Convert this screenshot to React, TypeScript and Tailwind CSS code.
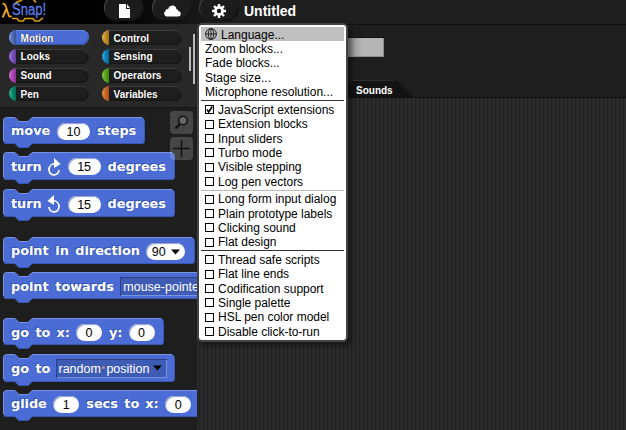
import React from "react";

const SANS = "font-['Liberation_Sans',Arial,sans-serif]";

function Category({ label, color, active }: { label: string; color: string; active?: boolean }) {
  return (
    <div
      className={`flex h-[15px] w-20 items-center overflow-hidden rounded-full font-bold leading-none text-white ${SANS} ${
        active
          ? "bg-[#4a6cd4] shadow-[inset_0_1px_0_#6a88e0,inset_-1px_-1px_1px_#3551a8]"
          : "bg-[#1e1e1e] shadow-[inset_0_1px_0_#3c3c3c,inset_-1px_-1px_1px_#161616]"
      }`}
    >
      <span
        className="h-full w-[7px] shrink-0 bg-linear-to-r from-white/20 to-black/30"
        style={{ backgroundColor: color }}
      />
      <span className="ml-[4.6px] pt-[2px] text-[10px] [text-shadow:0_0_1px_#000]">{label}</span>
    </div>
  );
}

const LEFT = [
  ["Motion", "#5a7ad8"],
  ["Looks", "#8f56e3"],
  ["Sound", "#cf4ad9"],
  ["Pen", "#00a178"],
];
const RIGHT = [
  ["Control", "#e6a822"],
  ["Sensing", "#0494dc"],
  ["Operators", "#62c213"],
  ["Variables", "#f3761d"],
];

function Block({ width, height, gap, children }: { width: number; height: number; gap: number; children: React.ReactNode }) {
  const w = width;
  const h = height;
  const d = `M.5 3.5Q.5 .5 3.5 .5H12L16 4.5H25L29 .5H${w - 3.5}Q${w - 0.5} .5 ${w - 0.5} 3.5V${h - 3}Q${w - 0.5} ${h} ${w - 3.5} ${h}H29L25 ${h + 4}H16L12 ${h}H3.5Q.5 ${h} .5 ${h - 3}Z`;
  return (
    <div className="relative shrink-0" style={{ width: w, height: h, marginTop: gap }}>
      <svg className="absolute left-0 top-0 overflow-visible" width={w} height={h + 5}>
        <path d={d} fill="#4a6cd4" />
        <path d={`M.5 ${h - 3}V3.5Q.5 .5 3.5 .5H12L16 4.5H25L29 .5H${w - 3}`} fill="none" stroke="#7893e2" />
        <path
          d={`M${w - 0.5} 4V${h - 3}Q${w - 0.5} ${h - 0.5} ${w - 3.5} ${h - 0.5}H29L25 ${h + 3.5}H16L12 ${h - 0.5}H3`}
          fill="none"
          stroke="#3857b4"
        />
      </svg>
      <div className="relative flex h-full items-center pl-2 pt-[2px]">{children}</div>
    </div>
  );
}

function Word({ w, children }: { w: number; children: string }) {
  return (
    <span
      className="shrink-0 whitespace-nowrap font-['DejaVu_Sans',sans-serif] text-[12.8px] font-bold leading-4 text-white [text-shadow:-1px_-1px_0_#3654ad]"
      style={{ width: w }}
    >
      {children}
    </span>
  );
}

function Num({ w, mr = 0, arrow, children }: { w: number; mr?: number; arrow?: boolean; children: string }) {
  return (
    <span
      className={`flex h-[17px] shrink-0 items-center justify-center rounded-full bg-white pt-[2px] text-[12.5px] leading-none text-black shadow-[inset_1px_1px_1px_#8e9cc8] ${SANS}`}
      style={{ width: w, marginRight: mr }}
    >
      {children}
      {arrow && (
        <svg className="-mt-px ml-[5px]" width="9" height="6">
          <path d="M0 .5H9L4.5 5.5Z" />
        </svg>
      )}
    </span>
  );
}

function Turn({ left }: { left?: boolean }) {
  return (
    <svg className={left ? "mr-[6.6px] mt-px -scale-x-100" : "mr-[6.6px] mt-px"} width="14" height="19" viewBox="0 0 14 19">
      <path d="M8 5.5C4 6 1.7 8.7 2 12C2.4 15.3 4.7 17 7.2 16.8C10 16.6 11.8 14.5 12 12" fill="none" stroke="#fff" strokeWidth="1.7" />
      <path d="M7 0L13.5 6L7 10Z" fill="#fff" />
    </svg>
  );
}

function Item({ children }: { children: string }) {
  return <div className="flex h-[14.35px] items-center pl-1 pt-px">{children}</div>;
}

function Check({ on, children }: { on?: boolean; children: string }) {
  return (
    <div className="flex h-[14.35px] items-center gap-1 pl-1">
      <svg width="9" height="9" className="shrink-0">
        <rect x=".5" y=".5" width="8" height="8" fill="none" stroke="#000" />
        {on && <path d="M2 4.5L3.7 7L7.3 1.5" fill="none" stroke="#000" strokeWidth="1.6" />}
      </svg>
      <span className="whitespace-nowrap tracking-[-0.02px]">{children}</span>
    </div>
  );
}

function HeaderButton({ children }: { children: React.ReactNode }) {
  return (
    <div className="-mt-[6px] flex h-[27px] w-10 items-center justify-center rounded-full bg-[#1c1c1c] pt-[6px] shadow-[inset_1px_1px_1px_#444,inset_-1px_-1px_1px_#111]">
      {children}
    </div>
  );
}

export default function App() {
  return (
    <div className="relative flex h-[430px] w-[626px] flex-col overflow-hidden bg-[#1e1e1e]">
      <header className="flex h-6 shrink-0 items-start bg-linear-to-r from-black from-5% to-[#1e1e1e] to-35%">
        <svg width="104" height="24" className="shrink-0">
          <path
            d="M14 5Q16 1.5 20 1L23-1M33-1L36 2.5M12 18.5H17L19 21H23L25 18.5H33L35 21H39L42 18.5H43"
            fill="none"
            stroke="#e0a010"
            strokeWidth="1.6"
          />
          <path d="M2.5 3.8Q5 3 6.2 7.5L8.6 15Q9.6 17.6 11.5 16M6.4 9L2.6 17.5" fill="none" stroke="#e8a512" strokeWidth="1.9" />
          <text
            x="12"
            y="15"
            fontFamily="Liberation Sans, sans-serif"
            fontSize="16"
            fill="#5b7de6"
            stroke="#5b7de6"
            strokeWidth=".3"
            textLength="34"
            lengthAdjust="spacingAndGlyphs"
          >
            Snap!
          </text>
        </svg>
        <div className="flex gap-[7.5px]">
          <HeaderButton>
            <svg width="11" height="14" className="ml-px">
              <path d="M0 0H7V5H11V14H0ZM8 0L11 4H8Z" fill="#fff" />
            </svg>
          </HeaderButton>
          <HeaderButton>
            <svg width="18" height="12">
              <path d="M3.5 11.5A3 3 0 0 1 2.5 6Q3 3.5 5.2 4Q6 .5 9.5 .5Q13 .5 13.4 4.2Q15 4 15.4 6Q18 6.6 17.8 9Q17.6 11.5 15 11.5Z" fill="#fff" />
            </svg>
          </HeaderButton>
          <HeaderButton>
            <svg width="14" height="14" viewBox="-7 -7 14 14">
              <circle r="3.6" fill="none" stroke="#fff" strokeWidth="2.8" />
              <path d="M0-7V-4M0 7V4M-7 0H-4M7 0H4M-5-5L-3-3M5 5L3 3M-5 5L-3 3M5-5L3-3" stroke="#fff" strokeWidth="2.4" />
            </svg>
          </HeaderButton>
        </div>
        <h1 className={`ml-[5px] mt-[3px] text-[14px] font-bold leading-4 text-white ${SANS}`}>Untitled</h1>
      </header>

      <div className="flex min-h-0 grow">
        <aside className="flex w-[197px] shrink-0 flex-col">
          <section className="flex h-[84px] shrink-0 border-b border-[#161616] bg-[#282828] pl-[9px] pt-[6px]">
            <div className="flex flex-col gap-[3.8px]">
              {LEFT.map(([l, c], i) => (
                <Category key={l} label={l} color={c} active={i === 0} />
              ))}
            </div>
            <div className="ml-[13px] flex flex-col gap-[3.8px]">
              {RIGHT.map(([l, c]) => (
                <Category key={l} label={l} color={c} />
              ))}
            </div>
            <div className="ml-[7px] mt-[17px] h-6 w-[2px] bg-[#bbb]" />
            <div className="ml-[2px] mt-1 h-[50px] w-[2px] bg-[#bbb]" />
          </section>

          <section className="relative flex min-h-0 grow flex-col overflow-hidden bg-[#1e1e1e] pl-[3px]">
            <Block width={142} height={27} gap={8.5}>
              <Word w={46}>move</Word>
              <Num w={33} mr={7}>10</Num>
              <Word w={42}>steps</Word>
            </Block>
            <Block width={172} height={28} gap={8}>
              <Word w={36}>turn</Word>
              <Turn />
              <Num w={33} mr={7}>15</Num>
              <Word w={60}>degrees</Word>
            </Block>
            <Block width={172} height={28} gap={9.5}>
              <Word w={36}>turn</Word>
              <Turn left />
              <Num w={33} mr={7}>15</Num>
              <Word w={60}>degrees</Word>
            </Block>
            <Block width={192} height={27} gap={19.5}>
              <Word w={44.3}>point</Word>
              <Word w={20}>in</Word>
              <Word w={71}>direction</Word>
              <Num w={39} arrow>90</Num>
            </Block>
            <Block width={240} height={27} gap={8.5}>
              <Word w={44.3}>point</Word>
              <Word w={65}>towards</Word>
              <span className={`flex h-[19px] w-[110px] items-center whitespace-nowrap bg-[#3f5cb5] pl-[3px] pt-[2px] text-[12.5px] leading-none text-white shadow-[inset_1px_1px_0_#2c4180,inset_-1px_-1px_0_#7893e2] ${SANS}`}>
                mouse-pointer
              </span>
            </Block>
            <Block width={161} height={27} gap={19}>
              <Word w={24.5}>go</Word>
              <Word w={21}>to</Word>
              <Word w={19.5}>x:</Word>
              <Num w={26} mr={7}>0</Num>
              <Word w={19.5}>y:</Word>
              <Num w={26}>0</Num>
            </Block>
            <Block width={172} height={28} gap={8.5}>
              <Word w={24.5}>go</Word>
              <Word w={20}>to</Word>
              <span className={`flex h-[19px] w-[111px] items-center whitespace-nowrap bg-[#3f5cb5] pl-[3px] pt-[2px] text-[12.5px] leading-none text-white shadow-[inset_1px_1px_0_#2c4180,inset_-1px_-1px_0_#7893e2] ${SANS}`}>
                random
                <span className="-mt-1 ml-[1px] mr-[1.5px] size-[3px] rounded-full bg-[#c88488]" />
                position
                <svg className="-mt-[3px] ml-1" width="9" height="6">
                  <path d="M0 .5H9L4.5 5.5Z" />
                </svg>
              </span>
            </Block>
            <Block width={230} height={27} gap={8}>
              <Word w={42.3}>glide</Word>
              <Num w={26} mr={7}>1</Num>
              <Word w={38}>secs</Word>
              <Word w={21}>to</Word>
              <Word w={20}>x:</Word>
              <Num w={26}>0</Num>
            </Block>

            <div className="absolute left-[170px] top-[3px] flex flex-col gap-[2.5px]">
              <div className="flex size-[23px] items-center justify-center rounded bg-white/18">
                <svg width="15" height="15">
                  <circle cx="9" cy="5.5" r="4.3" fill="#666" stroke="#111" strokeWidth="1.6" />
                  <path d="M6 9L1.5 13.5" stroke="#111" strokeWidth="2.4" />
                </svg>
              </div>
              <div className="flex size-[23px] items-center justify-center rounded bg-white/18">
                <svg width="17" height="17">
                  <path d="M8.5 0V17M0 8.5H17" stroke="#111" strokeWidth="1.6" />
                </svg>
              </div>
            </div>
          </section>
        </aside>

        <main className="flex grow flex-col border-l-2 border-[#282828]">
          <div className="flex h-[74px] shrink-0 flex-col justify-between border-b border-t border-[#101010] bg-[#1e1e1e]">
            <div className="ml-[100px] mt-3 h-5 w-[85px] bg-linear-to-r from-[#888] from-55% to-[#b5b5b5] to-75% shadow-[inset_0_1px_0_#111,inset_-1px_-1px_0_#8a8a8a]" />
            <div className="relative ml-[149px] h-[17px] w-[66px]">
              <svg className="absolute left-0 top-0" width="66" height="17">
                <path d="M0 17V3Q1 .5 5 .5H46Q50 .5 53 4L66 17Z" fill="#131313" />
                <path d="M1 3Q2 .5 5 .5H46" fill="none" stroke="#2e2e2e" />
              </svg>
              <span className={`relative ml-2 block pt-[5px] text-[10px] font-bold leading-3 text-white ${SANS}`}>Sounds</span>
            </div>
          </div>
          <div className="grow bg-[repeating-linear-gradient(90deg,#222_0px,#222_1px,#292929_1px,#292929_2px,#2e2e2e_2px,#2e2e2e_3px,#292929_3px,#292929_4px)]" />
        </main>
      </div>

      <div className={`absolute left-[197px] top-[23px] flex h-[319px] w-[151px] flex-col rounded-[5px] border-2 border-[#444] bg-white px-[2px] pt-[2px] text-[12px] leading-none text-black shadow-[4px_4px_4px_rgba(0,0,0,0.4)] ${SANS}`}>
        <div className="flex h-[14.35px] items-center gap-1 bg-[#c0c0c0] pl-1">
          <svg width="12" height="12" viewBox="0 0 12 12" fill="none" stroke="#222" strokeWidth="1">
            <circle cx="6" cy="6" r="5.4" />
            <ellipse cx="6" cy="6" rx="2.7" ry="5.4" />
            <path d="M6 .5V11.5M.5 6H11.5" />
          </svg>
          <span className="pt-px">Language...</span>
        </div>
        <Item>Zoom blocks...</Item>
        <Item>Fade blocks...</Item>
        <Item>Stage size...</Item>
        <Item>Microphone resolution...</Item>
        <div className="mb-[2px] mt-[1px] h-px shrink-0 bg-[#333]" />
        <Check on>JavaScript extensions</Check>
        <Check>Extension blocks</Check>
        <Check>Input sliders</Check>
        <Check>Turbo mode</Check>
        <Check>Visible stepping</Check>
        <Check>Log pen vectors</Check>
        <div className="mb-[1.3px] mt-[1px] h-px shrink-0 bg-[#bbb]" />
        <Check>Long form input dialog</Check>
        <Check>Plain prototype labels</Check>
        <Check>Clicking sound</Check>
        <Check>Flat design</Check>
        <div className="mb-[1.2px] mt-[1px] h-px shrink-0 bg-[#333]" />
        <Check>Thread safe scripts</Check>
        <Check>Flat line ends</Check>
        <Check>Codification support</Check>
        <Check>Single palette</Check>
        <Check>HSL pen color model</Check>
        <Check>Disable click-to-run</Check>
      </div>
    </div>
  );
}
